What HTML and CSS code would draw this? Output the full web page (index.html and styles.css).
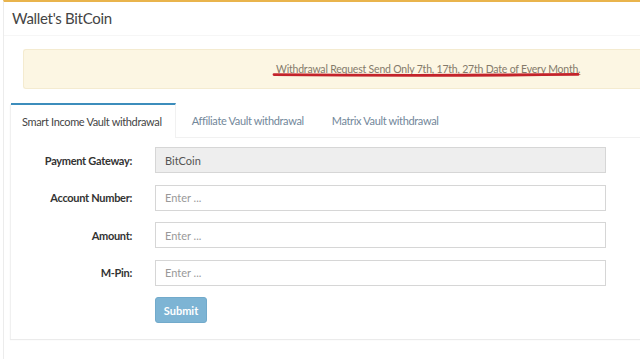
FILE: index.html
```html
<!DOCTYPE html>
<html>
<head>
<meta charset="utf-8">
<link rel="stylesheet" href="styles.css">
</head>
<body>
<div class="box">
  <div class="box-header"><h3 class="box-title">Wallet's BitCoin</h3></div>
  <div class="box-body">
    <div class="callout">
      <span class="notice">Withdrawal Request Send Only 7th, 17th, 27th Date of Every Month.</span>
      <svg class="scribble" width="312" height="6" viewBox="0 0 312 6"><path d="M2 2.6 C80 3.4 200 3.6 306 2.4" stroke="#c3232b" stroke-width="2.8" fill="none" stroke-linecap="round"/></svg>
    </div>
  </div>
  <div class="tabs">
    <ul class="nav">
      <li class="tab active">Smart Income Vault withdrawal</li>
      <li class="tab">Affiliate Vault withdrawal</li>
      <li class="tab">Matrix Vault withdrawal</li>
    </ul>
    <form class="form">
      <div class="row"><label>Payment Gateway:</label><input class="input disabled" value="BitCoin" disabled></div>
      <div class="row"><label>Account Number:</label><input class="input" placeholder="Enter ..."></div>
      <div class="row"><label>Amount:</label><input class="input" placeholder="Enter ..."></div>
      <div class="row"><label>M-Pin:</label><input class="input" placeholder="Enter ..."></div>
      <div class="row"><span class="spacer"></span><button type="button" class="btn">Submit</button></div>
    </form>
  </div>
</div>
</body>
</html>
```
FILE: styles.css
```css
html, body { margin: 0; padding: 0; background: #fff; }
body { font-family: "Lato", "Open Sans", sans-serif; color: #333; }
.box {
  margin-left: 3px;
  border-top: 2px solid #e9b44c;
  border-left: 1px solid #ececec;
  min-height: 359px;
  box-sizing: border-box;
}
.box-header { padding: 7px 8px 0; border-bottom: 1px solid #f6f6f6; height: 26px; }
.box-title { margin: 0; font-size: 15px; font-weight: 400; color: #444; letter-spacing: -0.3px; }
.box-body { padding: 13px 0 0 19px; }
.callout {
  position: relative;
  height: 38px;
  background: #fcf6e3;
  border: 1px solid #f4ebd0;
  border-right: none;
  border-radius: 3px 0 0 3px;
  display: flex; align-items: center;
  padding-left: 252px;
}
.notice { font-size: 10.5px; letter-spacing: -0.2px; color: #847a6a; text-decoration: underline; text-decoration-color: #a99a86; margin-top: 0; }
.scribble { position: absolute; left: 248px; top: 22px; }
.tabs {
  margin: 15px 0 0 6px;
  background: #fff;
  box-shadow: 0 1px 1px rgba(0,0,0,0.08);
  border-left: 1px solid #f0f0f0;
  height: 235px;
}
.nav { list-style: none; margin: 0; padding: 0; display: flex; border-bottom: 1px solid #f1f1f1; height: 33px; }
.tab { font-size: 11px; letter-spacing: -0.35px; color: #72879a; padding: 0 14px; display: flex; align-items: center; white-space: nowrap; }
.tab:nth-child(2) { padding-left: 16px; padding-right: 14px; }
.tab:nth-child(3) { padding-left: 14px; }
.tab.active { color: #444; border-top: 2px solid #3c8dbc; border-right: 1px solid #f1f1f1; padding: 0 13px 0 11px; background: #fff; margin-bottom: -1px; margin-top: -1px; }
.form { padding: 9px 0 0; display: flex; flex-direction: column; gap: 11.5px; }
.row { display: flex; align-items: center; gap: 23px; }
.row label, .spacer { width: 121px; text-align: right; font-size: 11px; letter-spacing: -0.3px; font-weight: 700; color: #333; flex: none; }
.input {
  width: 451px; height: 26px; box-sizing: border-box;
  border: 1px solid #d6d6d6; border-radius: 0;
  padding: 0 9px; font-family: inherit; font-size: 11px; color: #555; background: #fff;
  margin: 0;
}
.input::placeholder { color: #999; }
.input.disabled { background: #eee; color: #555; }
.btn {
  margin-top: 0; height: 26px; width: 52px;
  background: #7db4d4; border: 1px solid #72aacb; border-radius: 3px;
  color: #fff; font-family: inherit; font-size: 11px; font-weight: 700; padding: 0;
}
```
